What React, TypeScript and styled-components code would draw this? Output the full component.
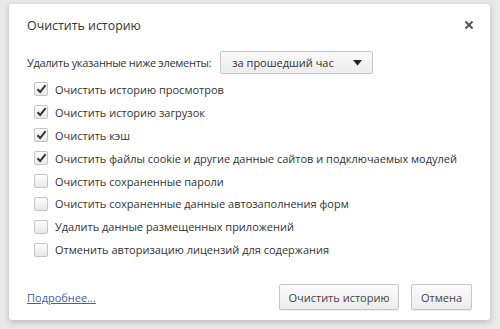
import React from 'react'
import styled, { createGlobalStyle } from 'styled-components'

const GlobalStyle = createGlobalStyle`
  html, body {
    margin: 0;
    padding: 0;
    width: 500px;
    height: 329px;
    overflow: hidden;
    background: #e9e9e9;
    font-family: 'Open Sans', 'Noto Sans', sans-serif;
  }
`

const Page = styled.div`
  position: relative;
  width: 500px;
  height: 329px;
  background: #e9e9e9;
  overflow: hidden;
`

const Dialog = styled.div`
  position: absolute;
  left: 9px;
  top: 4px;
  width: 481px;
  height: 316px;
  box-sizing: border-box;
  background: #fff;
  border-radius: 3px;
  box-shadow: 0 2px 6px rgba(0, 0, 0, 0.22);
  padding: 12px 18px 0 18px;
  display: flex;
  flex-direction: column;
`

const Header = styled.div`
  display: flex;
  align-items: center;
  justify-content: space-between;
  height: 18px;
`

const Title = styled.div`
  font-size: 12.4px;
  color: #333;
`

const Close = styled.div`
  width: 10px;
  height: 10px;
  margin-right: -2px;
  display: flex;
`

const TimeRow = styled.div`
  display: flex;
  align-items: center;
  margin-top: 17px;
  font-size: 11px;
  color: #333;
`

const TimeLabel = styled.span`
  letter-spacing: -0.3px;
`

const Select = styled.div`
  margin-left: 9px;
  width: 153px;
  height: 23px;
  box-sizing: border-box;
  border: 1px solid #c8c8c8;
  border-radius: 2px;
  background: linear-gradient(#fafafa, #ececec);
  display: flex;
  align-items: center;
  justify-content: space-between;
  padding: 0 10px 0 11px;
  font-size: 11px;
  color: #333;
`

const List = styled.div`
  display: flex;
  flex-direction: column;
  margin-top: 4px;
  padding-left: 7px;
`

const Item = styled.label`
  display: flex;
  align-items: center;
  height: 22.9px;
  font-size: 11px;
  color: #333;
  white-space: nowrap;
`

const Box = styled.span`
  width: 12px;
  height: 12px;
  border: 1px solid #c4c4c4;
  border-radius: 2px;
  background: linear-gradient(#fdfdfd, #e8e8e8);
  margin-right: 7px;
  display: flex;
  align-items: center;
  justify-content: center;
`

const Footer = styled.div`
  display: flex;
  align-items: center;
  margin-top: auto;
  margin-bottom: 10px;
`

const Link = styled.a`
  font-size: 11px;
  color: #3f5fa6;
  text-decoration: underline;
  margin-right: auto;
`

const Button = styled.div<{ w: number }>`
  width: ${(p) => p.w}px;
  height: 26px;
  box-sizing: border-box;
  border: 1px solid #c6c6c6;
  border-radius: 2px;
  background: linear-gradient(#fbfbfb, #ececec);
  box-shadow: 0 1px 0 rgba(0, 0, 0, 0.06);
  display: flex;
  align-items: center;
  justify-content: center;
  font-size: 11px;
  color: #444;
  & + & {
    margin-left: 12px;
  }
`

const Check = () => (
  <svg width="11" height="10" viewBox="0 0 11 10">
    <path d="M1.5 5.2 L4.2 8 L9.6 1.2" fill="none" stroke="#333" strokeWidth="2" />
  </svg>
)

const items: [string, boolean][] = [
  ['Очистить историю просмотров', true],
  ['Очистить историю загрузок', true],
  ['Очистить кэш', true],
  ['Очистить файлы cookie и другие данные сайтов и подключаемых модулей', true],
  ['Очистить сохраненные пароли', false],
  ['Очистить сохраненные данные автозаполнения форм', false],
  ['Удалить данные размещенных приложений', false],
  ['Отменить авторизацию лицензий для содержания', false],
]

const App = () => (
  <Page>
    <GlobalStyle />
    <Dialog>
      <Header>
        <Title>Очистить историю</Title>
        <Close>
          <svg width="10" height="10" viewBox="0 0 10 10">
            <path d="M1.5 1.5 L8.5 8.5 M8.5 1.5 L1.5 8.5" stroke="#555" strokeWidth="2" />
          </svg>
        </Close>
      </Header>
      <TimeRow>
        <TimeLabel>Удалить указанные ниже элементы:</TimeLabel>
        <Select>
          за прошедший час
          <svg width="9" height="6" viewBox="0 0 9 6">
            <path d="M0 0 H9 L4.5 5.5 Z" fill="#222" />
          </svg>
        </Select>
      </TimeRow>
      <List>
        {items.map(([text, on]) => (
          <Item key={text}>
            <Box>{on && <Check />}</Box>
            {text}
          </Item>
        ))}
      </List>
      <Footer>
        <Link>Подробнее...</Link>
        <Button w={120}>Очистить историю</Button>
        <Button w={61}>Отмена</Button>
      </Footer>
    </Dialog>
  </Page>
)

export default App
